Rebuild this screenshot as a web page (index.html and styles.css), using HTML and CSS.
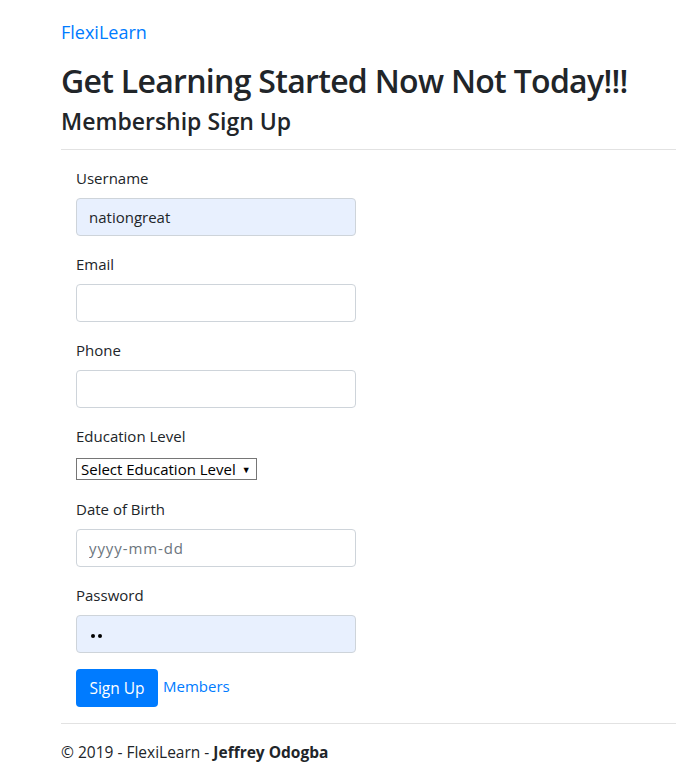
FILE: index.html
```html
<!DOCTYPE html>
<html>
<head>
<meta charset="utf-8">
<link rel="stylesheet" href="styles.css">
</head>
<body>
<div class="page">
  <a class="brand" href="#">FlexiLearn</a>
  <h1 class="title">Get Learning Started Now Not Today!!!</h1>
  <h2 class="subtitle">Membership Sign Up</h2>
  <hr class="rule">
  <form class="form">
    <div class="group">
      <label class="label">Username</label>
      <input class="input autofill" type="text" value="nationgreat">
    </div>
    <div class="group">
      <label class="label">Email</label>
      <input class="input" type="text">
    </div>
    <div class="group">
      <label class="label">Phone</label>
      <input class="input" type="text">
    </div>
    <div class="group">
      <label class="label">Education Level</label>
      <div class="select"><span>Select Education Level</span><span class="caret">▼</span></div>
    </div>
    <div class="group">
      <label class="label">Date of Birth</label>
      <input class="input date" type="text" placeholder="yyyy-mm-dd">
    </div>
    <div class="group">
      <label class="label">Password</label>
      <div class="input autofill pw"><span class="dot"></span><span class="dot"></span></div>
    </div>
    <div class="actions">
      <button class="btn" type="button">Sign Up</button>
      <a class="members" href="#">Members</a>
    </div>
  </form>
  <hr class="rule foot-rule">
  <footer class="footer">© 2019 - FlexiLearn - <strong>Jeffrey Odogba</strong></footer>
</div>
</body>
</html>
```
FILE: styles.css
```css
html, body {
  margin: 0;
  padding: 0;
  background: #fff;
}
body {
  font-family: "Open Sans", "Noto Sans", sans-serif;
  font-size: 15px;
  color: #212529;
  overflow: hidden;
}
.page {
  padding-left: 61px;
  padding-top: 18px;
}
.brand {
  display: block;
  font-size: 18px;
  line-height: 28px;
  color: #007bff;
  text-decoration: none;
}
.title {
  margin: 14px 0 0;
  font-size: 32px;
  font-weight: 600;
  letter-spacing: -0.7px;
  line-height: 42px;
  white-space: nowrap;
}
.subtitle {
  margin: 4px 0 0;
  font-size: 23px;
  font-weight: 600;
  line-height: 30px;
}
.rule {
  margin: 13px 0 0;
  border: 0;
  border-top: 1px solid #e2e2e2;
  height: 0;
}
.form {
  padding: 16px 15px 0;
  width: 280px;
}
.group {
  display: flex;
  flex-direction: column;
  margin-bottom: 16px;
}
.label {
  line-height: 24px;
  margin-bottom: 8px;
}
.input {
  box-sizing: border-box;
  width: 280px;
  height: 38px;
  padding: 6px 12px;
  font: inherit;
  font-size: 15px;
  color: #212529;
  border: 1px solid #ced4da;
  border-radius: 4px;
  background: #fff;
  outline: none;
}
.input::placeholder {
  color: #6c757d;
}
.date::placeholder {
  letter-spacing: 0.9px;
}
.autofill {
  background: #e8f0fe;
}
.pw {
  display: flex;
  align-items: center;
  gap: 3px;
  padding-left: 14px;
  padding-top: 9px;
}
.dot {
  width: 4px;
  height: 4px;
  border-radius: 50%;
  background: #000;
}
.select {
  box-sizing: border-box;
  display: inline-flex;
  align-self: flex-start;
  align-items: center;
  gap: 6px;
  height: 22px;
  width: 181px;
  padding: 0 4px;
  border: 1px solid #767676;
  font-size: 15px;
  color: #000;
  margin-top: 2px;
  margin-bottom: 1px;
}
.caret {
  font-size: 9px;
}
.actions {
  display: flex;
  align-items: center;
  gap: 5px;
}
.btn {
  width: 82px;
  height: 38px;
  padding: 0;
  border: 0;
  border-radius: 4px;
  background: #007bff;
  color: #fff;
  font: inherit;
  font-size: 15.5px;
}
.members {
  color: #007bff;
  text-decoration: none;
  margin-top: -4px;
}
.foot-rule {
  margin-top: 16px;
}
.footer {
  padding: 16px 0;
  line-height: 24px;
  font-size: 15.5px;
}
.footer strong {
  font-weight: 700;
}
```
